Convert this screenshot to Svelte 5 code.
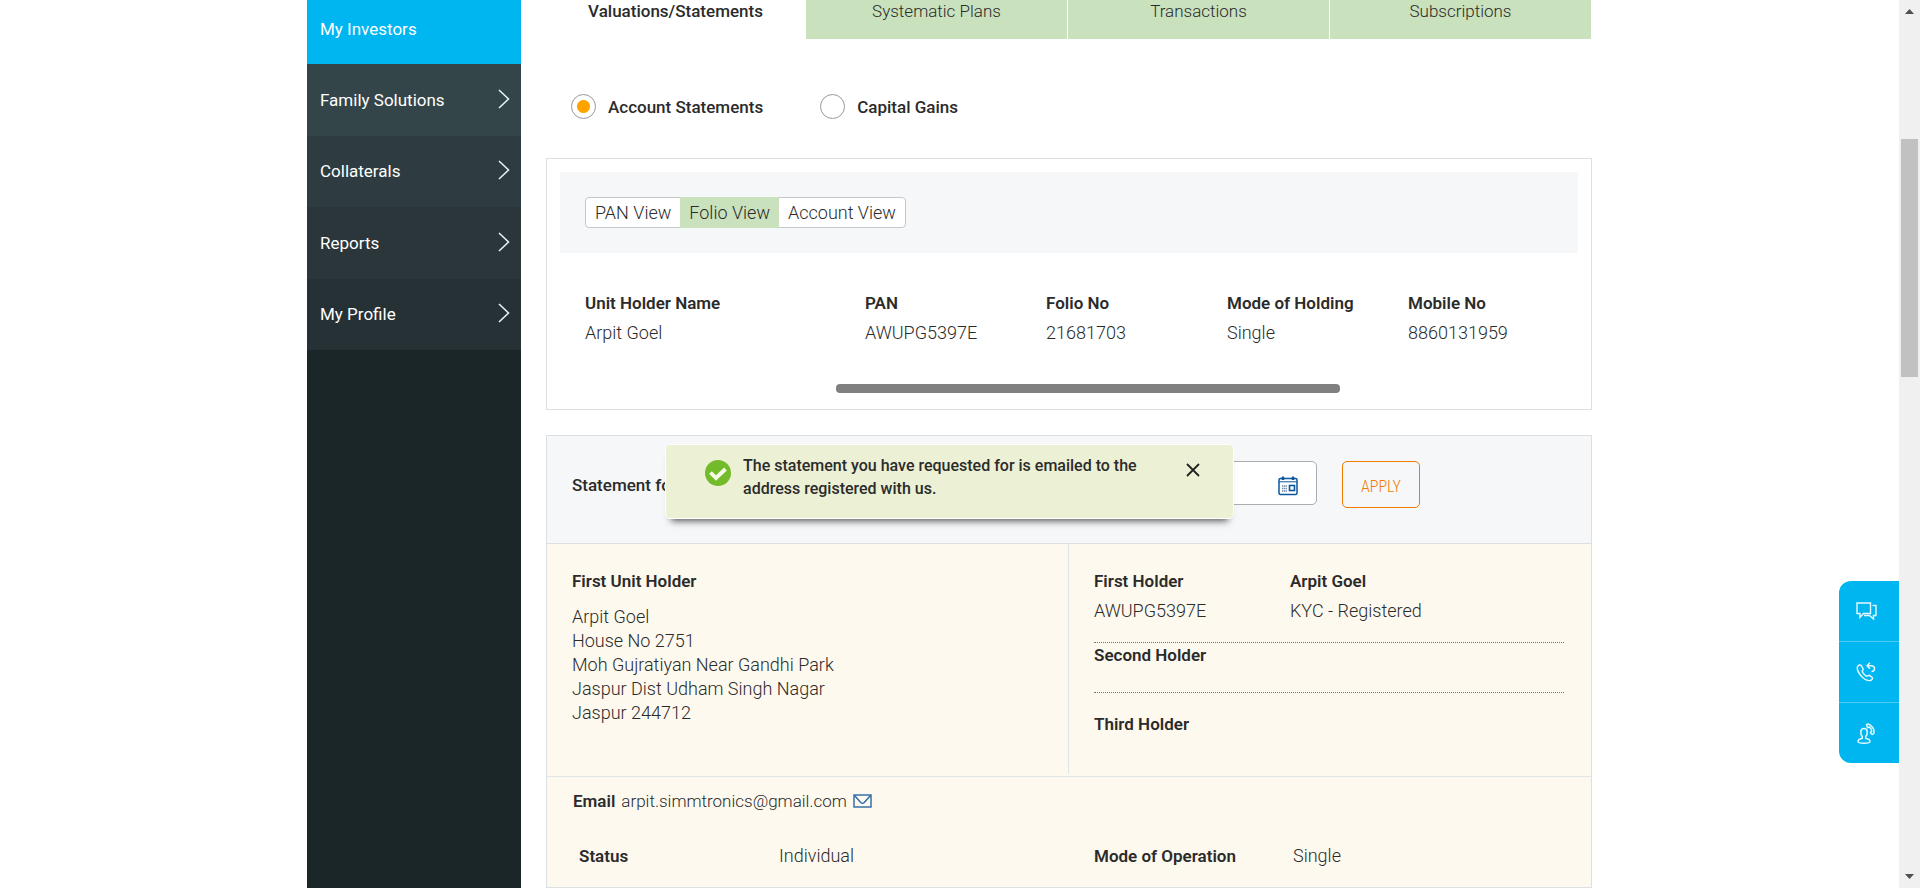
<script>
  const menu = ['My Investors', 'Family Solutions', 'Collaterals', 'Reports', 'My Profile'];
  const tabs = ['Valuations/Statements', 'Systematic Plans', 'Transactions', 'Subscriptions'];
  const views = ['PAN View', 'Folio View', 'Account View'];
  const folio = [
    ['Unit Holder Name', 'Arpit Goel'],
    ['PAN', 'AWUPG5397E'],
    ['Folio No', '21681703'],
    ['Mode of Holding', 'Single'],
    ['Mobile No', '8860131959']
  ];
  const address = [
    'Arpit Goel',
    'House No 2751',
    'Moh Gujratiyan Near Gandhi Park',
    'Jaspur Dist Udham Singh Nagar',
    'Jaspur 244712'
  ];
  let view = $state('Folio View');
  let statement = $state('account');
  let toast = $state(true);
</script>

<div class="page">
  <div class="container">
    <nav class="side" aria-label="Main">
      <ul>
        {#each menu as item, i}
          <li class:active={i === 0}>
            <a href="#menu">
              <span>{item}</span>
              {#if i > 0}
                <svg width="12" height="22" viewBox="0 0 12 22" fill="none" stroke="#e4f1f6" stroke-width="1.6"><path d="M1 1l9.500 9L1 19" /></svg>
              {/if}
            </a>
          </li>
        {/each}
      </ul>
    </nav>

    <main>
      <div class="tabs" role="tablist">
        {#each tabs as tab, i}
          <button role="tab" aria-selected={i === 0} class:current={i === 0}>{tab}</button>
        {/each}
      </div>

      <div class="radios">
        <label><input type="radio" name="kind" value="account" bind:group={statement} />Account Statements</label>
        <label><input type="radio" name="kind" value="gains" bind:group={statement} />Capital Gains</label>
      </div>

      <section class="card folio">
        <div class="band">
          <div class="views">
            {#each views as v}
              <button class:on={view === v} onclick={() => (view = v)}>{v}</button>
            {/each}
          </div>
        </div>
        <table>
          <thead>
            <tr>{#each folio as f}<th>{f[0]}</th>{/each}</tr>
          </thead>
          <tbody>
            <tr>{#each folio as f}<td>{f[1]}</td>{/each}</tr>
          </tbody>
        </table>
        <div class="hbar"></div>
      </section>

      <section class="card statement">
        <header>
          <label for="period">Statement for</label>
          <div class="datebox">
            <input id="period" type="text" />
            <button aria-label="Open calendar">
              <svg width="20" height="20" viewBox="0 0 20 20" fill="none" stroke="#0c569c">
                <rect x="1" y="2.500" width="18" height="16" rx="1.500" stroke-width="1.500" />
                <path d="M1 5.800h18" stroke-width="1" />
                <path d="M5 .5v3.500M15 .5v3.500" stroke-width="2" />
                <path d="M3.500 2.500h3M13.500 2.500h3" stroke-width="2" />
                <rect x="11.500" y="9.500" width="5" height="5" stroke-width="1.600" />
                <path d="M4 10h5M4 12.500h5M4 15h5" stroke="#6d8bb0" stroke-width="1.600" stroke-dasharray="1.400 .5" />
              </svg>
            </button>
          </div>
          <button class="apply">APPLY</button>
          {#if toast}
            <div class="toast" role="status">
              <svg class="ok" width="26" height="26" viewBox="0 0 26 26"><circle cx="13" cy="13" r="13" fill="#74bb2c" /><path d="M5.500 12.500l5.500 5.500L20.500 9" fill="none" stroke="#f5f9e6" stroke-width="3.800" /></svg>
              <p>The statement you have requested for is emailed to the address registered with us.</p>
              <button aria-label="Close" onclick={() => (toast = false)}>
                <svg width="14" height="14" viewBox="0 0 14 14" stroke="#222" stroke-width="1.800"><path d="M1 1l12 12M13 1L1 13" /></svg>
              </button>
            </div>
          {/if}
        </header>

        <div class="holders">
          <div class="first">
            <h2>First Unit Holder</h2>
            <address>{#each address as line}<span>{line}</span>{/each}</address>
          </div>
          <div class="others">
            <div class="holder two">
              <div><strong>First Holder</strong><span>AWUPG5397E</span></div>
              <div><strong>Arpit Goel</strong><span>KYC - Registered</span></div>
            </div>
            <div class="holder second"><strong>Second Holder</strong></div>
            <div class="holder third"><strong>Third Holder</strong></div>
          </div>
        </div>

        <div class="contact">
          <div class="email">
            <strong>Email</strong>
            <span>arpit.simmtronics@gmail.com</span>
            <a href="#email" aria-label="Edit email"><svg width="19" height="14" viewBox="0 0 19 14" fill="none" stroke="#2a67a5" stroke-width="1.400"><rect x="1" y="1" width="17" height="12" /><path d="M1.500 1.500l6.500 7.200q1.500 1.200 3 0l6.500-7.200" /></svg></a>
          </div>
          <dl>
            <dt>Status</dt>
            <dd>Individual</dd>
            <dt>Mode of Operation</dt>
            <dd>Single</dd>
          </dl>
        </div>
      </section>
    </main>
  </div>

  <div class="help">
    <button aria-label="Chat">
      <svg width="21" height="19" viewBox="0 0 21 19" fill="none" stroke="#e6f8ff" stroke-width="1.400"><path d="M1 1h13.500v10.500H7.500L4 15.500v-4H1z" /><path d="M16.500 3.500H20v10h-2.500v3.500l-4-3.500H8" /></svg>
    </button>
    <button aria-label="Call back">
      <svg width="20" height="20" viewBox="0 0 20 20" fill="none" stroke="#e6f8ff" stroke-width="1.500" stroke-linejoin="round"><path d="M2.200 3.800C.5 5 1 8.500 4 12.500s7.500 6.600 10.500 6c1.500-.4 2.500-2 1.800-3l-2.800-2.200c-.9-.6-1.600.8-2.500 1-1.500 0-4.500-3.500-4.800-5 .2-1 1.400-1.500.9-2.500L5.300 3.700c-.8-1.200-2.300-.6-3.100.1z" /><path d="M14 .8l-3 3 3 3M11 3.800h4c2.500 0 3.500 1 3.500 3 0 1.500-1 2.600-3 2.600" /></svg>
    </button>
    <button aria-label="Advisor">
      <svg width="18" height="21" viewBox="0 0 18 21" fill="none" stroke="#e6f8ff" stroke-width="1.500" stroke-linejoin="round"><path d="M5.300 13.500C3 11 3 5.500 7 5.500s4 5.500 1.700 8v1.700c2.500.6 4.300 1.300 4.300 3.300 0 1-2.500 1.700-6 1.700s-6-.7-6-1.700c0-2 1.800-2.700 4.300-3.300z" /><path d="M9.500 1.500c.8-1 2-.7 3.500.3 2.500 1.800 4.300 5 4 7.700-.1 1.500-1.500 2.200-2.500 1.500l-1-1.500c0-1 1.200-.8 1.200-1.500 0-1.500-1.200-3.200-2.500-4-.8-.2-.8 1-1.700.7z" /></svg>
    </button>
  </div>

  <div class="vbar">
    <svg class="up" width="9" height="5" viewBox="0 0 9 5"><path d="M0 5L4.500 0 9 5z" fill="#505050" /></svg>
    <div class="thumb"></div>
    <svg class="down" width="9" height="5" viewBox="0 0 9 5"><path d="M0 0l4.500 5L9 0z" fill="#505050" /></svg>
  </div>
</div>

<style>
  :global(body) {
    margin: 0;
    background: #fff;
  }
  .page {
    display: flex;
    height: 100vh;
    overflow: hidden;
    position: relative;
    font: 300 18px/24px Roboto, 'Open Sans', sans-serif;
    color: #2b2b2b;
  }
  .page * {
    box-sizing: border-box;
  }
  button,
  input {
    font: inherit;
    color: inherit;
  }
  button {
    border: 0;
    padding: 0;
    background: none;
  }
  strong,
  h2,
  dt,
  th {
    margin: 0;
    font-size: 17px;
    font-weight: 600;
  }
  .container {
    flex: 0 1 1285px;
    margin: 0 auto;
    display: flex;
    gap: 25px;
  }
  .side {
    flex: 0 0 214px;
    background: #1b2629;
  }
  .side ul {
    list-style: none;
    margin: 0;
    padding: 0;
    height: 350px;
    display: grid;
    grid-template-rows: 64px repeat(4, 1fr);
  }
  .side li:nth-child(2) { background: #334549; }
  .side li:nth-child(3) { background: #2e3c41; }
  .side li:nth-child(4) { background: #2a363a; }
  .side li:nth-child(5) { background: #263136; }
  .side li.active {
    background: #00b6f1;
    padding-bottom: 6px;
  }
  .side a {
    height: 100%;
    padding: 0 11px 0 13px;
    display: flex;
    align-items: center;
    justify-content: space-between;
    color: #fff;
    font-size: 17px;
    font-weight: 400;
    text-decoration: none;
  }
  main {
    flex: 1;
    min-width: 0;
  }
  .tabs {
    display: grid;
    grid-template-columns: 260px repeat(3, 1fr);
  }
  .tabs button {
    height: 39px;
    padding-bottom: 17px;
    background: #c9e1bd;
    border-right: 1px solid #fff;
    font-size: 17px;
    line-height: 20px;
  }
  .tabs .current {
    background: #fff;
    font-weight: 500;
  }
  .radios {
    display: flex;
    gap: 57px;
    padding: 55px 25px 39px;
  }
  .radios label {
    display: flex;
    align-items: center;
    gap: 12px;
    height: 25px;
    font-size: 17px;
    font-weight: 500;
  }
  .radios input {
    appearance: none;
    width: 25px;
    height: 25px;
    margin: 0;
    border: 1px solid #999;
    border-radius: 50%;
    background: #fff;
  }
  .radios input:checked {
    background: radial-gradient(circle, #ffa300 6px, #fff 7px);
  }
  .card {
    border: 1px solid #dbe0e4;
  }
  .folio {
    padding: 13px;
    height: 252px;
    margin-bottom: 25px;
  }
  .band {
    background: #f5f7f9;
    padding: 25px;
    height: 81px;
  }
  .views {
    display: inline-flex;
    height: 31px;
    background: #fff;
    border: 1px solid #c4c8cb;
    border-radius: 4px;
  }
  .views button {
    padding: 0 9px;
    margin: -1px 0;
    font-size: 18px;
  }
  .views .on {
    background: #c9e1bd;
  }
  table {
    width: 100%;
    margin-top: 35px;
    border-collapse: collapse;
    text-align: left;
    table-layout: fixed;
  }
  th,
  td {
    padding: 0;
    width: 181px;
    height: 30px;
    white-space: nowrap;
  }
  th:first-child,
  td:first-child {
    width: 305px;
    padding-left: 25px;
  }
  th:last-child,
  td:last-child {
    width: auto;
  }
  .hbar {
    width: 504px;
    height: 9px;
    margin: 36px 238px 0 auto;
    border-radius: 4px;
    background: #808080;
  }
  .statement header {
    position: relative;
    display: flex;
    align-items: flex-start;
    padding: 25px;
    height: 108px;
    background: #f5f7f9;
    border-bottom: 1px solid #dbe0e4;
  }
  header label {
    width: 125px;
    font-size: 17px;
    font-weight: 500;
    line-height: 48px;
  }
  .datebox {
    flex: 0 0 620px;
    display: flex;
    height: 44px;
    border: 1px solid #adadad;
    border-radius: 5px;
    background: #fff;
  }
  .datebox input {
    flex: 1;
    min-width: 0;
    border: 0;
    background: none;
  }
  .datebox button {
    display: grid;
    padding: 14px 18px;
  }
  .apply {
    width: 78px;
    height: 47px;
    margin-left: 25px;
    padding-top: 4px;
    border: 1px solid #f27a00;
    border-radius: 5px;
    color: #f27a00;
    font-family: 'Roboto Condensed', 'Liberation Sans Narrow', Roboto, sans-serif;
    font-size: 16px;
  }
  .toast {
    position: absolute;
    top: 8px;
    left: 118px;
    display: flex;
    align-items: flex-start;
    width: 569px;
    height: 75px;
    padding: 9px 33px 0 39px;
    border: 1px solid #fff;
    border-radius: 5px;
    background: #ecf0d4;
    box-shadow: 0 8px 7px -6px #555;
  }
  .toast p {
    flex: 1;
    margin: 0 45px 0 12px;
    font-size: 16px;
    line-height: 23px;
    font-weight: 500;
  }
  .toast .ok {
    margin-top: 6px;
  }
  .toast button {
    display: grid;
    margin-top: 9px;
  }
  .holders,
  .contact {
    background: #fef9ee;
  }
  .holders {
    display: grid;
    grid-template-columns: 1fr 1fr;
    height: 233px;
    border-bottom: 1px solid #e2e5e8;
  }
  .first {
    padding: 25px;
    margin-bottom: 2px;
    border-right: 1px solid #e2e5e8;
  }
  .others {
    padding: 25px 27px 25px 25px;
  }
  address {
    margin-top: 12px;
    font-style: normal;
  }
  address span,
  .two span,
  .two strong {
    display: block;
  }
  .two {
    display: grid;
    grid-template-columns: 196px 1fr;
    height: 74px;
  }
  .two span {
    margin-top: 6px;
  }
  .two,
  .second {
    border-bottom: 1px dotted #777;
  }
  .second {
    height: 50px;
  }
  .third {
    padding-top: 19px;
  }
  .contact {
    height: 110px;
    padding: 12px 26px;
  }
  .email {
    display: flex;
    align-items: center;
    gap: 6px;
    font-size: 17px;
  }
  .email a {
    display: grid;
  }
  dl {
    display: grid;
    grid-template-columns: 200px 315px 199px 1fr;
    margin: 31px 0 0;
    padding-left: 6px;
  }
  dd {
    margin: 0;
  }
  .help {
    position: absolute;
    right: 21px;
    top: 581px;
    width: 60px;
    border-radius: 12px 0 0 12px;
    background: #00b6f1;
  }
  .help button {
    display: grid;
    place-items: center;
    width: 100%;
    height: 60px;
    padding-right: 6px;
  }
  .help button + button {
    height: 61px;
    border-top: 1px solid #4dccf5;
  }
  .vbar {
    flex: 0 0 21px;
    display: flex;
    flex-direction: column;
    align-items: center;
    padding: 9px 0;
    background: #f0f0f0;
  }
  .thumb {
    width: 17px;
    height: 238px;
    margin: 125px 0 auto;
    background: #c1c1c1;
  }
</style>
